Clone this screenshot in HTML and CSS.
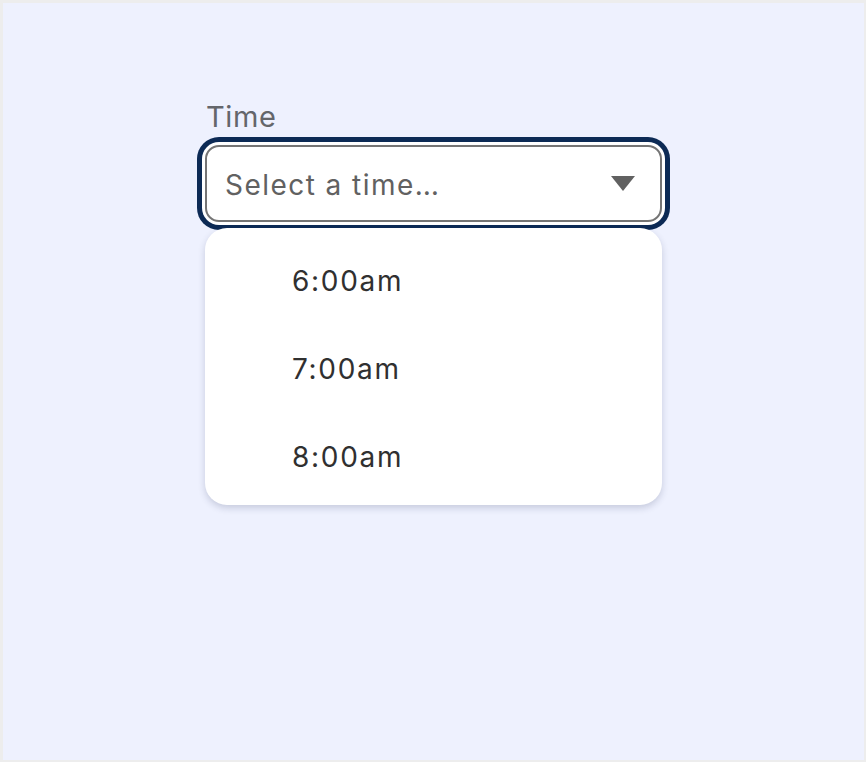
FILE: index.html
```html
<!DOCTYPE html>
<html>
<head>
<meta charset="utf-8">
<link rel="stylesheet" href="styles.css">
</head>
<body>
<div class="frame">
  <div class="field">
    <label class="label">Time</label>
    <div class="select">
      <span class="placeholder">Select a time…</span>
      <svg class="arrow" width="24" height="15" viewBox="0 0 24 15"><path d="M0 0 H24 L12 15 Z" fill="#616161"/></svg>
    </div>
    <ul class="menu">
      <li class="option">6:00am</li>
      <li class="option">7:00am</li>
      <li class="option">8:00am</li>
    </ul>
  </div>
</div>
</body>
</html>
```
FILE: styles.css
```css
html, body {
  margin: 0;
  padding: 0;
}
body {
  width: 866px;
  height: 762px;
  background: #ededed;
  padding: 3px 2px 2px 3px;
  box-sizing: border-box;
  font-family: Inter, Roboto, sans-serif;
}
.frame {
  width: 100%;
  height: 100%;
  background: #eef1fe;
  padding-top: 96px;
  padding-left: 202px;
  box-sizing: border-box;
}
.field {
  width: 457px;
  display: flex;
  flex-direction: column;
}
.label {
  font-size: 29px;
  letter-spacing: 0.6px;
  color: #64666b;
  line-height: 36px;
  margin-left: 1px;
  margin-bottom: 10px;
}
.select {
  height: 77px;
  box-sizing: border-box;
  border: 2px solid #757575;
  border-radius: 14px;
  background: #fff;
  box-shadow: 0 0 0 3px #fff, 0 0 0 8px #0c2a55;
  display: flex;
  align-items: center;
  justify-content: space-between;
  padding: 3px 25px 0 18px;
}
.placeholder {
  font-size: 28px;
  color: #616161;
  letter-spacing: 1.45px;
}
.arrow {
  display: block;
  margin-top: -3px;
}
.menu {
  list-style: none;
  margin: 6px 0 0 0;
  padding: 9px 0 4px;
  background: #fff;
  border-radius: 22px;
  box-shadow: 0 3px 7px rgba(40, 50, 90, 0.2);
  box-sizing: border-box;
}
.option {
  height: 88px;
  display: flex;
  align-items: center;
  padding-left: 87px;
  font-size: 28px;
  letter-spacing: 1.7px;
  color: #303030;
}
```
